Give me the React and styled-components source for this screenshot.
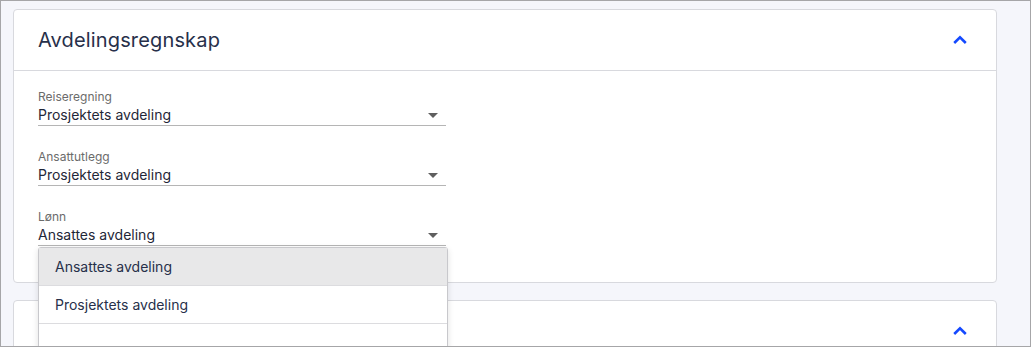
import styled, { createGlobalStyle } from "styled-components";

const GlobalStyle = createGlobalStyle`
  html, body {
    margin: 0;
    padding: 0;
    background: #f5f6fb;
    font-family: "Inter", "Liberation Sans", sans-serif;
  }
  * { box-sizing: border-box; }
`;

const sections = [
  {
    title: "Avdelingsregnskap",
    fields: [
      { label: "Reiseregning", value: "Prosjektets avdeling" },
      { label: "Ansattutlegg", value: "Prosjektets avdeling" },
      { label: "Lønn", value: "Ansattes avdeling", open: true },
    ],
  },
  { title: "", fields: [] },
];

const options = ["Ansattes avdeling", "Prosjektets avdeling", ""];

const ChevronUp = () => (
  <svg width="16" height="10" viewBox="0 0 16 10">
    <path d="M2.2 8 L8 2.4 L13.8 8" fill="none" stroke="#1449ff" strokeWidth="2.6" />
  </svg>
);

const Field = ({ label, value, open }) => (
  <FieldWrap>
    <Label>{label}</Label>
    <SelectBox>
      <Value>{value}</Value>
      <Caret />
    </SelectBox>
    {open && (
      <Menu>
        {options.map((o, i) => (
          <Option key={i} $active={i === 0}>
            {o}
          </Option>
        ))}
      </Menu>
    )}
  </FieldWrap>
);

const App = () => {
  return (
    <Frame>
      <GlobalStyle />
      {sections.map((s, i) => (
        <Card key={i}>
          <CardHeader>
            <Title>{s.title}</Title>
            <Toggle>
              <ChevronUp />
            </Toggle>
          </CardHeader>
          {s.fields.length > 0 && (
            <CardBody>
              {s.fields.map((f) => (
                <Field key={f.label} {...f} />
              ))}
            </CardBody>
          )}
        </Card>
      ))}
    </Frame>
  );
};
export default App;

const Frame = styled.div`
  width: 100vw;
  height: 100vh;
  overflow: hidden;
  border: 1px solid #a6a6a8;
  padding: 8px 33px 0 12px;
  display: flex;
  flex-direction: column;
  gap: 17px;
`;
const Card = styled.div`
  background: #fff;
  border: 1px solid #d8d9de;
  border-radius: 4px;
  flex-shrink: 0;
`;
const CardHeader = styled.div`
  height: 61px;
  display: flex;
  align-items: center;
  justify-content: space-between;
  padding: 0 24px;
  border-bottom: 1px solid #d8d9de;
`;
const Title = styled.h2`
  margin: 0;
  font-size: 20px;
  font-weight: 400;
  color: #27304a;
  letter-spacing: 0.15px;
`;
const Toggle = styled.div`
  width: 24px;
  height: 24px;
  display: flex;
  align-items: center;
  justify-content: center;
`;
const CardBody = styled.div`
  padding: 18px 24px 36px;
  display: flex;
  flex-direction: column;
  gap: 23px;
`;
const FieldWrap = styled.div`
  position: relative;
  width: 408px;
`;
const Label = styled.div`
  font-size: 12px;
  line-height: 16px;
  color: #6b6b6b;
`;
const SelectBox = styled.div`
  display: flex;
  align-items: center;
  justify-content: space-between;
  height: 21px;
  border-bottom: 1px solid #b5b5b5;
  padding-right: 8px;
`;
const Value = styled.span`
  font-size: 14px;
  line-height: 20px;
  color: #1f2738;
`;
const Caret = styled.span`
  width: 0;
  height: 0;
  border-left: 5px solid transparent;
  border-right: 5px solid transparent;
  border-top: 5px solid #5f5f5f;
`;
const Menu = styled.div`
  position: absolute;
  top: 100%;
  left: 0;
  width: 410px;
  margin-top: 1px;
  background: #fff;
  border: 1px solid #c8c8cc;
  border-radius: 3px;
  box-shadow: 0 2px 6px rgba(0, 0, 0, 0.12);
  z-index: 10;
`;
const Option = styled.div`
  height: 38px;
  display: flex;
  align-items: center;
  padding-left: 16px;
  font-size: 14px;
  color: #27304a;
  background: ${(p) => (p.$active ? "#e8e8e9" : "#fff")};
  border-bottom: 1px solid #dcdcdf;
`;
